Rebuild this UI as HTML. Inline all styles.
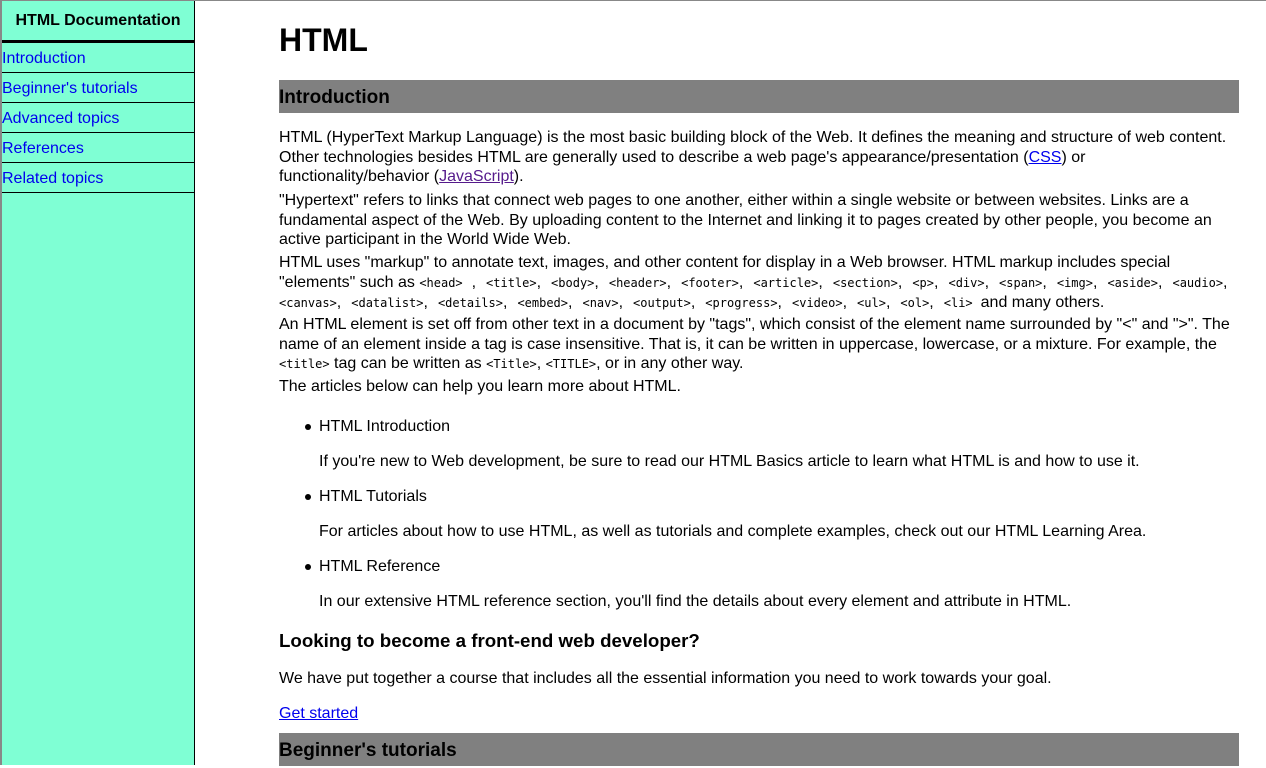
<!DOCTYPE html>
<html><head><meta charset="utf-8"><style>
html,body{margin:0;padding:0;width:1266px;height:765px;overflow:hidden;background:#fff;font-family:"Liberation Sans",sans-serif;color:#000}
.top{position:absolute;left:0;top:0;width:1266px;height:1px;background:#888}
.side{position:absolute;left:0;top:1px;width:192px;height:764px;background:#7fffd4;border-left:2px solid #888;border-right:1px solid #000}
.side .hd{height:39px;border-bottom:3px solid #000;font-weight:bold;font-size:16px;text-align:center;line-height:40px}
.side a{display:block;height:29px;border-bottom:1px solid #000;line-height:31px;color:#00e;text-decoration:none;font-size:16px}
.a{position:absolute;left:279px;font-size:16px;white-space:nowrap}
.p{line-height:19.5px}
code{font-family:"DejaVu Sans Mono",monospace;font-size:12px}
s{display:inline-block;width:10px;text-decoration:none}
.h2{position:absolute;left:279px;width:960px;background:#808080;font-weight:bold;font-size:19px;height:33px;line-height:35px}
a.l{color:#00e;text-decoration:underline}
a.v{color:#551a8b;text-decoration:underline}
.b{position:absolute;left:305px;width:6px;height:6px;border-radius:50%;background:#000}
</style></head><body>
<div class="top"></div>
<div class="side">
<div class="hd">HTML Documentation</div>
<a>Introduction</a><a>Beginner's tutorials</a><a>Advanced topics</a><a>References</a><a>Related topics</a>
</div>
<div class="a" style="top:20px;font-size:32px;font-weight:bold;line-height:40px">HTML</div>
<div class="h2" style="top:80px">Introduction</div>
<div class="a p" style="top:128px">HTML (HyperText Markup Language) is the most basic building block of the Web. It defines the meaning and structure of web content.<br>Other technologies besides HTML are generally used to describe a web page's appearance/presentation (<a class="l">CSS</a>) or<br>functionality/behavior (<a class="v">JavaScript</a>).</div>
<div class="a p" style="top:191px">"Hypertext" refers to links that connect web pages to one another, either within a single website or between websites. Links are a<br>fundamental aspect of the Web. By uploading content to the Internet and linking it to pages created by other people, you become an<br>active participant in the World Wide Web.</div>
<div class="a p" style="top:253px">HTML uses "markup" to annotate text, images, and other content for display in a Web browser. HTML markup includes special<br>"elements" such as <code>&lt;head&gt;</code> &nbsp;,<s></s><code>&lt;title&gt;</code>,<s></s><code>&lt;body&gt;</code>,<s></s><code>&lt;header&gt;</code>,<s></s><code>&lt;footer&gt;</code>,<s></s><code>&lt;article&gt;</code>,<s></s><code>&lt;section&gt;</code>,<s></s><code>&lt;p&gt;</code>,<s></s><code>&lt;div&gt;</code>,<s></s><code>&lt;span&gt;</code>,<s></s><code>&lt;img&gt;</code>,<s></s><code>&lt;aside&gt;</code>,<s></s><code>&lt;audio&gt;</code>,<br><code>&lt;canvas&gt;</code>,<s></s><code>&lt;datalist&gt;</code>,<s></s><code>&lt;details&gt;</code>,<s></s><code>&lt;embed&gt;</code>,<s></s><code>&lt;nav&gt;</code>,<s></s><code>&lt;output&gt;</code>,<s></s><code>&lt;progress&gt;</code>,<s></s><code>&lt;video&gt;</code>,<s></s><code>&lt;ul&gt;</code>,<s></s><code>&lt;ol&gt;</code>,<s></s><code>&lt;li&gt;</code><s style="width:8px"></s>and many others.</div>
<div class="a p" style="top:315px">An HTML element is set off from other text in a document by "tags", which consist of the element name surrounded by "&lt;" and "&gt;". The<br>name of an element inside a tag is case insensitive. That is, it can be written in uppercase, lowercase, or a mixture. For example, the<br><code>&lt;title&gt;</code> tag can be written as <code>&lt;Title&gt;</code>, <code>&lt;TITLE&gt;</code>, or in any other way.</div>
<div class="a p" style="top:377px">The articles below can help you learn more about HTML.</div>
<div class="b" style="top:424px"></div>
<div class="a p" style="top:417px;left:319px">HTML Introduction</div>
<div class="a p" style="top:452px;left:319px">If you're new to Web development, be sure to read our HTML Basics article to learn what HTML is and how to use it.</div>
<div class="b" style="top:494px"></div>
<div class="a p" style="top:487px;left:319px">HTML Tutorials</div>
<div class="a p" style="top:522px;left:319px">For articles about how to use HTML, as well as tutorials and complete examples, check out our HTML Learning Area.</div>
<div class="b" style="top:564px"></div>
<div class="a p" style="top:557px;left:319px">HTML Reference</div>
<div class="a p" style="top:592px;left:319px">In our extensive HTML reference section, you'll find the details about every element and attribute in HTML.</div>
<div class="a" style="top:630px;font-size:18.72px;font-weight:bold;line-height:22px">Looking to become a front-end web developer?</div>
<div class="a p" style="top:669px">We have put together a course that includes all the essential information you need to work towards your goal.</div>
<div class="a p" style="top:704px"><a class="l">Get started</a></div>
<div class="h2" style="top:733px">Beginner's tutorials</div>
</body></html>
